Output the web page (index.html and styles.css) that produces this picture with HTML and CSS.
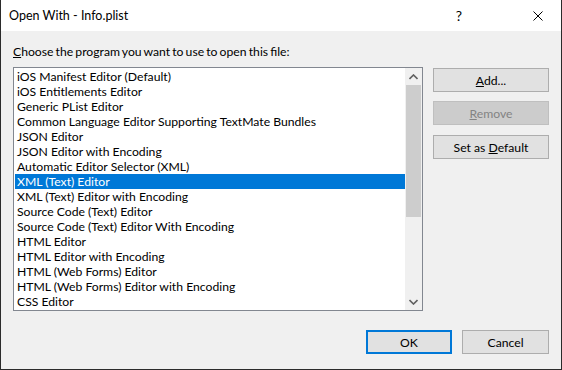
FILE: index.html
```html
<!DOCTYPE html>
<html>
<head>
  <meta charset="utf-8">
  <title>Open With - Info.plist</title>
  <link rel="stylesheet" href="styles.css">
</head>
<body>
  <div class="window">
    <div class="titlebar">
      <span class="title">Open With - Info.plist</span>
      <span class="help">?</span>
      <span class="close">
        <svg width="10" height="10" viewBox="0 0 10 10"><path d="M0.5 0.5 L9.5 9.5 M9.5 0.5 L0.5 9.5" stroke="#000" stroke-width="1" fill="none"/></svg>
      </span>
    </div>

    <div class="content">
      <div class="prompt"><u>C</u>hoose the program you want to use to open this file:</div>

      <div class="main">
        <div class="listbox">
          <ul class="items">
            <li>iOS Manifest Editor (Default)</li>
            <li>iOS Entitlements Editor</li>
            <li>Generic PList Editor</li>
            <li>Common Language Editor Supporting TextMate Bundles</li>
            <li>JSON Editor</li>
            <li>JSON Editor with Encoding</li>
            <li>Automatic Editor Selector (XML)</li>
            <li class="selected">XML (Text) Editor</li>
            <li>XML (Text) Editor with Encoding</li>
            <li>Source Code (Text) Editor</li>
            <li>Source Code (Text) Editor With Encoding</li>
            <li>HTML Editor</li>
            <li>HTML Editor with Encoding</li>
            <li>HTML (Web Forms) Editor</li>
            <li>HTML (Web Forms) Editor with Encoding</li>
            <li>CSS Editor</li>
          </ul>
          <div class="scrollbar">
            <div class="arrow">
              <svg width="9" height="6" viewBox="0 0 9 6"><path d="M0.5 5 L4.5 1 L8.5 5" stroke="#606060" stroke-width="1.6" fill="none"/></svg>
            </div>
            <div class="track">
              <div class="thumb"></div>
            </div>
            <div class="arrow">
              <svg width="9" height="6" viewBox="0 0 9 6"><path d="M0.5 1 L4.5 5 L8.5 1" stroke="#606060" stroke-width="1.6" fill="none"/></svg>
            </div>
          </div>
        </div>

        <div class="side">
          <button class="btn"><u>A</u>dd...</button>
          <button class="btn disabled"><u>R</u>emove</button>
          <button class="btn set-default">Set as <u>D</u>efault</button>
        </div>
      </div>

      <div class="footer">
        <button class="btn btn-default">OK</button>
        <button class="btn">Cancel</button>
      </div>
    </div>
  </div>
</body>
</html>
```

FILE: styles.css
```css
* {
  box-sizing: border-box;
}
html, body {
  margin: 0;
  padding: 0;
}
body {
  font-family: Lato, "Noto Sans", sans-serif;
  font-size: 12.2px;
  color: #000;
  background: #f0f0f0;
}
.window {
  width: 562px;
  height: 370px;
  display: flex;
  flex-direction: column;
  background: #f0f0f0;
  border: 1px solid #2b2b2b;
  border-top: none;
}
.titlebar {
  height: 31px;
  background: #fff;
  display: flex;
  align-items: center;
  padding-left: 8px;
}
.title {
  flex: 1;
  font-size: 12.5px;
}
.help {
  width: 46px;
  font-size: 14px;
  text-align: center;
  margin-right: 33px;
}
.close {
  width: 46px;
  display: flex;
  justify-content: center;
  padding-top: 1px;
}
.content {
  flex: 1;
  padding: 13px 12px 15px 12px;
  display: flex;
  flex-direction: column;
}
.prompt {
  height: 15px;
  line-height: 15px;
  margin-bottom: 8px;
  word-spacing: -1px;
}
.main {
  display: flex;
  gap: 10px;
  height: 244px;
}
.listbox {
  width: 410px;
  height: 244px;
  background: #fff;
  border: 1px solid #828790;
  display: flex;
  padding: 1px 0 1px 1px;
}
.items {
  list-style: none;
  margin: 0;
  padding: 0;
  flex: 1;
  overflow: hidden;
}
.items li {
  height: 15px;
  line-height: 15px;
  padding-left: 2px;
  white-space: nowrap;
}
.items li.selected {
  background: #0078d7;
  color: #fff;
}
.scrollbar {
  width: 17px;
  margin-top: -1px;
  margin-bottom: -1px;
  background: #f0f0f0;
  display: flex;
  flex-direction: column;
}
.arrow {
  height: 17px;
  display: flex;
  align-items: center;
  justify-content: center;
}
.track {
  flex: 1;
  padding: 0 1px;
}
.thumb {
  height: 132px;
  background: #cdcdcd;
}
.side {
  width: 116px;
  display: flex;
  flex-direction: column;
  padding-top: 1px;
}
.btn {
  height: 24px;
  margin: 0;
  padding: 0;
  font: inherit;
  color: #000;
  background: #e1e1e1;
  border: 1px solid #adadad;
  border-radius: 0;
}
.side .btn + .btn {
  margin-top: 9px;
}
.side .set-default {
  margin-top: 10px !important;
}
.btn.disabled {
  background: #cccccc;
  border-color: #bfbfbf;
  color: #838383;
}
.footer {
  display: flex;
  justify-content: flex-end;
  gap: 10px;
  margin-top: 19px;
}
.footer .btn {
  width: 86px;
}
.footer .btn + .btn {
  width: 87px;
}
.btn-default {
  border: 2px solid #0078d7;
}
```
